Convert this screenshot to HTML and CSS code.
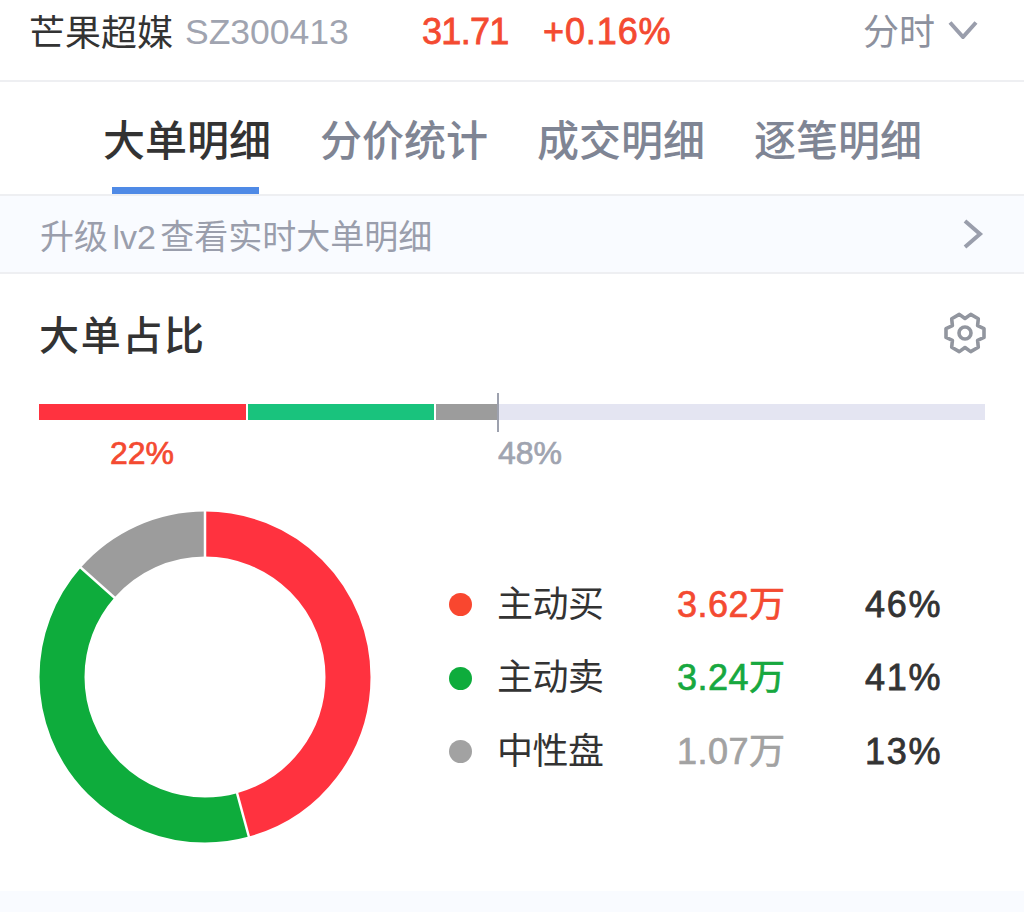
FILE: index.html
```html
<!DOCTYPE html>
<html lang="zh-CN">
<head>
    <meta charset="UTF-8">
    <meta name="viewport" content="width=device-width, initial-scale=1.0">
    <title>大单明细</title>
    <link rel="stylesheet" href="styles.css">
</head>
<body>
    <header class="top-bar">
        <span class="stock-name">芒果超媒</span>
        <span class="stock-code">SZ300413</span>
        <span class="stock-price">31.71</span>
        <span class="stock-change">+0.16%</span>
        <span class="period">分时
            <svg class="period-arrow" width="30" height="18" viewBox="0 0 30 18"><path d="M2 1.5 L15 16 L28 1.5" /></svg>
        </span>
    </header>

    <nav class="tabs">
        <a class="tab tab-active">大单明细</a>
        <a class="tab">分价统计</a>
        <a class="tab">成交明细</a>
        <a class="tab">逐笔明细</a>
    </nav>

    <div class="upgrade-banner">
        <span class="banner-text">升级 lv2 查看实时大单明细</span>
        <svg class="banner-arrow" width="22" height="32" viewBox="0 0 22 32"><path d="M3 3 L18 16 L3 29" /></svg>
    </div>

    <main class="panel">
        <div class="panel-head">
            <h2 class="panel-title">大单占比</h2>
            <svg class="gear" width="44" height="44" viewBox="-22 -22 44 44">
                <path d="M19 -4.4 L19 4.4 L12.6 7.3 L13.3 14.3 L5.7 18.6 L0 14.5 L-5.7 18.6 L-13.3 14.3 L-12.6 7.3 L-19 4.4 L-19 -4.4 L-12.6 -7.3 L-13.3 -14.3 L-5.7 -18.6 L0 -14.5 L5.7 -18.6 L13.3 -14.3 L12.6 -7.3 Z" />
                <circle r="6" />
            </svg>
        </div>

        <div class="ratio">
            <div class="ratio-bar">
                <div class="seg seg-red"></div>
                <div class="seg seg-green"></div>
                <div class="seg seg-gray"></div>
                <div class="seg seg-rest"><span class="ratio-tick"></span></div>
            </div>
            <div class="ratio-labels">
                <span class="ratio-left">22%</span>
                <span class="ratio-right">48%</span>
            </div>
        </div>

        <div class="summary">
            <svg class="donut" width="332" height="332" viewBox="0 0 332 332">
                <g fill="none" stroke-width="45" transform="rotate(-90 166 166)">
                    <circle cx="166" cy="166" r="143" pathLength="360" stroke="#ff323f" stroke-dasharray="164.6 360" />
                    <circle cx="166" cy="166" r="143" pathLength="360" stroke="#0eac3c" stroke-dasharray="146.7 360" stroke-dashoffset="-164.6" />
                    <circle cx="166" cy="166" r="143" pathLength="360" stroke="#9c9c9c" stroke-dasharray="48.7 360" stroke-dashoffset="-311.3" />
                </g>
                <g stroke="#fff" stroke-width="2.5">
                    <line x1="166" y1="0" x2="166" y2="47" />
                    <line x1="197.5" y1="280" x2="210.5" y2="328" />
                    <line x1="40" y1="55" x2="77" y2="88" />
                </g>
            </svg>

            <div class="legend">
                <div class="legend-row">
                    <span class="dot dot-red"></span>
                    <span class="legend-name">主动买</span>
                    <span class="legend-value text-red">3.62万</span>
                    <span class="legend-pct">46%</span>
                </div>
                <div class="legend-row">
                    <span class="dot dot-green"></span>
                    <span class="legend-name">主动卖</span>
                    <span class="legend-value text-green">3.24万</span>
                    <span class="legend-pct">41%</span>
                </div>
                <div class="legend-row">
                    <span class="dot dot-gray"></span>
                    <span class="legend-name">中性盘</span>
                    <span class="legend-value text-gray">1.07万</span>
                    <span class="legend-pct">13%</span>
                </div>
            </div>
        </div>
    </main>

    <div class="page-foot"></div>
</body>
</html>
```

FILE: styles.css
```css
* {
    box-sizing: border-box;
}

html, body {
    margin: 0;
    height: 100%;
    overflow: hidden;
}

body {
    font-family: "Liberation Sans", "Noto Sans CJK SC", sans-serif;
    background-color: #fff;
    color: #333;
    display: flex;
    flex-direction: column;
}

/* top bar */
.top-bar {
    height: 82px;
    padding: 0 46px 20px 29px;
    display: flex;
    align-items: center;
    font-size: 36px;
    border-bottom: 2px solid #eeeff2;
}

.stock-name {
    width: 156px;
}

.stock-code {
    width: 237px;
    margin-top: 4px;
    font-size: 35.5px;
    color: #a0a4b0;
}

.stock-price {
    width: 121px;
    margin-top: 4px;
    color: #f44a31;
    letter-spacing: -0.7px;
    -webkit-text-stroke: 0.8px #f44a31;
}

.stock-change {
    margin-top: 4px;
    color: #f44a31;
    letter-spacing: 0.9px;
    -webkit-text-stroke: 0.8px #f44a31;
}

.period {
    margin-left: auto;
    margin-bottom: 2px;
    display: flex;
    align-items: center;
    gap: 13px;
    color: #8d919e;
}

.period-arrow {
    margin-top: 2px;
}

.period-arrow path,
.banner-arrow path {
    fill: none;
    stroke: #9a9eac;
    stroke-width: 4;
}

/* tabs */
.tabs {
    height: 114px;
    padding: 0 0 0 103px;
    display: flex;
    gap: 49px;
    border-bottom: 2px solid #eeeff2;
}

.tab {
    position: relative;
    height: 112px;
    padding-top: 30px;
    font-size: 42px;
    line-height: 60px;
    font-weight: 500;
    color: #7f8594;
}

.tab-active {
    color: #333;
}

.tab-active::after {
    content: "";
    position: absolute;
    left: 9px;
    right: 12px;
    bottom: 0;
    height: 7px;
    background-color: #4f8ae6;
}

/* banner */
.upgrade-banner {
    height: 78px;
    padding: 0 40px;
    display: flex;
    align-items: center;
    justify-content: space-between;
    font-size: 34px;
    color: #9a9eac;
    background-color: #f9fbff;
    border-bottom: 2px solid #eeeff2;
}

.banner-text {
    word-spacing: -5px;
}

/* panel */
.panel {
    flex-grow: 1;
    padding: 0 39px;
}

.panel-head {
    height: 119px;
    display: flex;
    align-items: center;
    justify-content: space-between;
}

.panel-title {
    margin: 0;
    padding-bottom: 2px;
    font-size: 40px;
    font-weight: 500;
    letter-spacing: 1.7px;
}

.gear {
    margin-right: -2px;
    margin-top: -2px;
}

.gear path,
.gear circle {
    fill: none;
    stroke: #92969f;
    stroke-width: 3.6;
    stroke-linejoin: round;
}

.ratio-bar {
    height: 16px;
    margin-top: 11px;
    display: flex;
    gap: 2px;
}

.seg {
    height: 100%;
}

.seg-red {
    width: 207px;
    background-color: #ff323f;
}

.seg-green {
    width: 186px;
    background-color: #19c37d;
}

.seg-gray {
    width: 62px;
    background-color: #9c9c9c;
}

.seg-rest {
    position: relative;
    flex-grow: 1;
    margin-left: -2px;
    background-color: #e4e5f2;
}

.ratio-tick {
    position: absolute;
    left: -1px;
    top: -11px;
    width: 2px;
    height: 39px;
    background-color: #9da1ae;
}

.ratio-labels {
    margin-top: 14px;
    display: grid;
    grid-template-columns: 206px 1fr;
    column-gap: 253px;
    font-size: 32px;
    line-height: 38px;
}

.ratio-left {
    text-align: center;
    color: #f44a31;
    -webkit-text-stroke: 0.7px #f44a31;
}

.ratio-right {
    color: #a0a4b0;
    -webkit-text-stroke: 0.7px #a0a4b0;
}

/* donut and legend */
.summary {
    margin-top: 39px;
    display: flex;
    align-items: center;
}

.legend {
    margin-left: 78px;
    padding-top: 2px;
    display: flex;
    flex-direction: column;
    gap: 23.5px;
}

.legend-row {
    height: 50px;
    display: grid;
    grid-template-columns: 24px 204px 188px auto;
    align-items: center;
    font-size: 36px;
    line-height: 50px;
}

.legend-name {
    padding-left: 24px;
    letter-spacing: -0.5px;
}

.legend-value {
    letter-spacing: 0.5px;
    -webkit-text-stroke: 0.7px currentColor;
}

.legend-pct {
    letter-spacing: 1.7px;
    -webkit-text-stroke: 0.8px currentColor;
}

.dot {
    width: 23px;
    height: 23px;
    border-radius: 50%;
}

.dot-red {
    background-color: #f9472f;
}

.dot-green {
    background-color: #0eac3c;
}

.dot-gray {
    background-color: #a2a2a2;
}

.text-red {
    color: #f44a31;
}

.text-green {
    color: #17a83f;
}

.text-gray {
    color: #a2a2a2;
}

.page-foot {
    height: 21px;
    background-color: #f9fbff;
}
```
